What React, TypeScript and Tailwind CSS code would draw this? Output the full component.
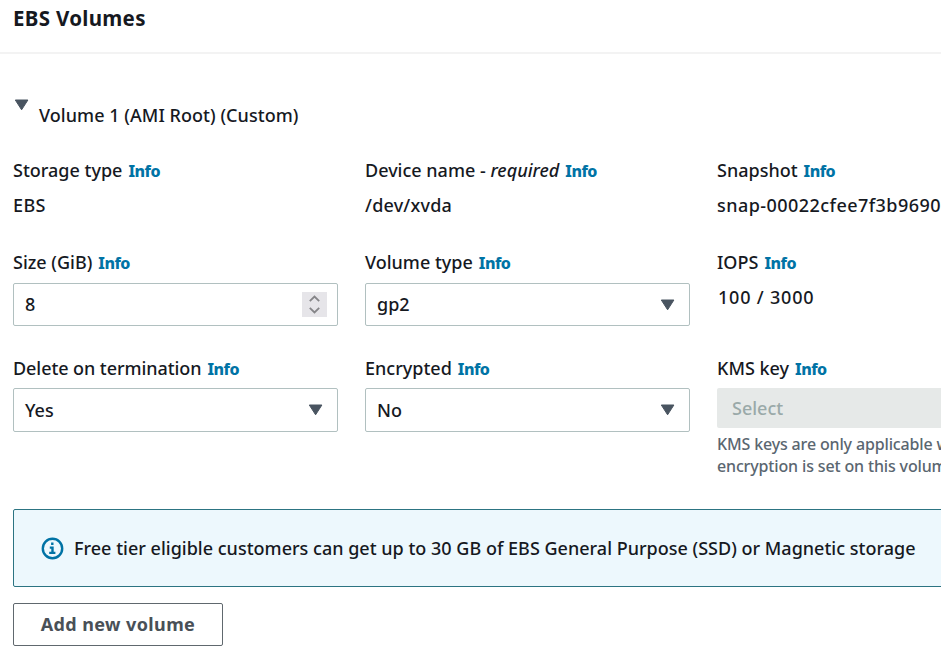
import type { ReactNode } from "react";

function Info() {
  return (
    <a className="ml-[6px] text-[16px] font-extrabold tracking-[-0.5px] text-[#0073a5]">Info</a>
  );
}

function Label({ children }: { children: ReactNode }) {
  return (
    <div className="-mt-px flex h-[22px] items-baseline whitespace-nowrap leading-[22px]">
      <span>{children}</span>
      <Info />
    </div>
  );
}

function Caret() {
  return (
    <svg width="15" height="12" viewBox="0 0 15 12" className="shrink-0">
      <path d="M1.3 1h12.6L7.6 10.8z" fill="#495460" stroke="#495460" strokeWidth="1" strokeLinejoin="round" />
    </svg>
  );
}

function Box({ children, icon, short }: { children: ReactNode; icon: ReactNode; short?: boolean }) {
  return (
    <div
      className={`${short ? "mt-[10px] h-[43px]" : "mt-[9px] h-[44px]"} flex w-[325px] items-center justify-between rounded-[2px] border border-[#b1c0c0] pl-[11px] pr-[14px]`}
    >
      <span>{children}</span>
      {icon}
    </div>
  );
}

function Stepper() {
  return (
    <div className="-mr-[4px] flex h-[25px] w-[25px] items-center justify-center bg-[#e6e5e9]">
      <svg width="13" height="19" viewBox="0 0 13 19" fill="none" stroke="#858588" strokeWidth="1.8">
        <path d="M1.8 6.2l4.7-4.7 4.7 4.7M1.8 12.8l4.7 4.7 4.7-4.7" />
      </svg>
    </div>
  );
}

export default function App() {
  return (
    <main className="h-[653px] w-[941px] overflow-hidden bg-white font-['Noto_Sans',sans-serif] text-[18px] font-medium text-[#16191f]">
      <header className="flex h-[54px] items-start border-b-2 border-[#f3f3f3] pl-[13px] pt-[6px]">
        <h1 className="text-[20.5px] font-bold leading-6 tracking-[0.3px]">EBS Volumes</h1>
      </header>

      <section className="pl-[13px]">
        <div className="flex h-[106px] items-start pl-px pt-[45px]">
          <Caret />
          <h2 className="ml-[10px] mt-[5px] leading-[22px] tracking-[0.05px]">Volume 1 (AMI Root) (Custom)</h2>
        </div>

        <div className="grid w-[1029px] grid-cols-[325px_325px_325px] gap-x-[27px]">
          <div className="h-[92px]">
            <Label>Storage type</Label>
            <div className="mt-[13px] leading-[22px] tracking-[0.4px]">EBS</div>
          </div>
          <div>
            <Label>Device name - <em>required</em></Label>
            <div className="mt-[13px] leading-[22px] tracking-[0.2px]">/dev/xvda</div>
          </div>
          <div>
            <Label>Snapshot</Label>
            <div className="mt-[13px] leading-[22px] tracking-[0.45px]">snap-00022cfee7f3b9690</div>
          </div>

          <div className="h-[106px]">
            <Label>Size (GiB)</Label>
            <Box short icon={<Stepper />}>8</Box>
          </div>
          <div>
            <Label>Volume type</Label>
            <Box short icon={<Caret />}>gp2</Box>
          </div>
          <div>
            <Label>IOPS</Label>
            <div className="mt-[13px] pl-px leading-[22px] tracking-[0.8px]">100 / 3000</div>
          </div>

          <div className="h-[151px]">
            <Label><span className="tracking-[-0.07px]">Delete on termination</span></Label>
            <Box icon={<Caret />}>Yes</Box>
          </div>
          <div>
            <Label>Encrypted</Label>
            <Box icon={<Caret />}>No</Box>
          </div>
          <div>
            <Label>KMS key</Label>
            <div className="mt-[9px] flex h-10 items-center rounded-[2px] bg-[#e6e9e8] pl-[15px] text-[#9aa9a9]">Select</div>
            <p className="mt-[5px] whitespace-nowrap text-[16px] leading-[22px] tracking-[-0.15px] text-[#5a6670]">
              KMS keys are only applicable when
              <br />
              encryption is set on this volume.
            </p>
          </div>
        </div>

        <div className="flex h-[78px] w-[1029px] items-center rounded-[2px] border border-[#2c7482] bg-[#edf8fd] pl-[27px]">
          <svg width="23" height="23" viewBox="0 0 23 23" fill="none" stroke="#0073a5" strokeWidth="2.4">
            <circle cx="11.5" cy="11.5" r="9.7" />
            <path d="M11.3 5.4v2.7M8.8 10.6h2.7v5.2M8.2 15.9h6.2" />
          </svg>
          <span className="ml-[10px] whitespace-nowrap tracking-[0.01px]">
            Free tier eligible customers can get up to 30 GB of EBS General Purpose (SSD) or Magnetic storage
          </span>
        </div>

        <button className="mt-4 flex h-[43px] w-[210px] items-center justify-center rounded-[2px] border border-[#60686e] text-[18px] font-bold tracking-[0.4px] text-[#495057]">
          Add new volume
        </button>
      </section>
    </main>
  );
}
